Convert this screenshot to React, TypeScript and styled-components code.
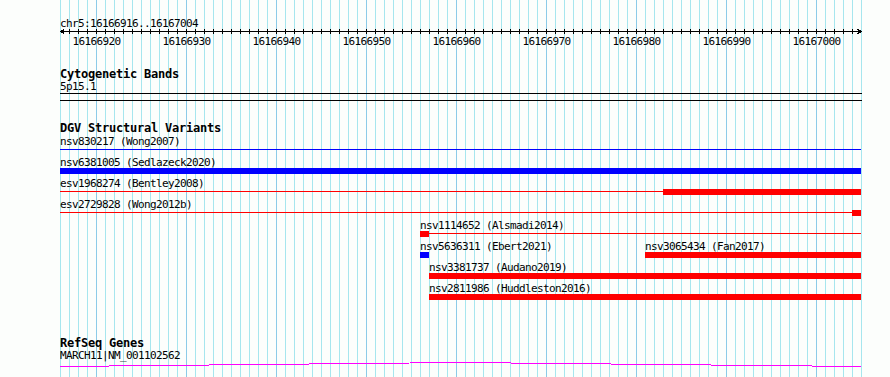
import React from 'react'
import styled, { createGlobalStyle } from 'styled-components'

// one base = 9px, panel starts at the first base of the view
const BP = 9
const VIEW_START = 16166916
const VIEW_WIDTH = 802

const GlobalStyle = createGlobalStyle`
    html, body {
        margin: 0;
        padding: 0;
        background: #fcfefc;
    }
`

const Panel = styled.div`
    width: ${VIEW_WIDTH}px;
    height: 377px;
    margin-left: 60px;
    overflow: hidden;
    background-color: #fcfefc;
    background-image: linear-gradient(90deg, #8ccbe8 1px, transparent 1px),
        linear-gradient(90deg, #a6e6ee 1px, transparent 1px);
    background-size: 90px 100%, 9px 100%;
    background-position: 36px 0, 0 0;
    background-repeat: repeat-x;
    font-family: "DejaVu Sans Mono", "Liberation Mono", monospace;
    color: #000;
`

const RulerTrack = styled.div`
    padding-top: 18px;
`

const Axis = styled.svg`
    display: block;
    overflow: visible;
`

const AxisLabel = styled.text`
    font-family: "DejaVu Sans Mono", "Liberation Mono", monospace;
    font-size: 11px;
    letter-spacing: -0.62px;
    fill: #000;
`

const Track = styled.section<{ $gap: number }>`
    margin-top: ${p => p.$gap}px;
`

const TrackTitle = styled.div`
    height: 12px;
    font-size: 12px;
    line-height: 12px;
    font-weight: bold;
    letter-spacing: -0.22px;
    white-space: pre;
`

const Label = styled.div<{ $gap?: number }>`
    height: 11px;
    margin-top: ${p => p.$gap ?? 0}px;
    font-size: 11px;
    line-height: 11px;
    letter-spacing: -0.62px;
    white-space: pre;
`

const Band = styled.div`
    height: 6px;
    margin-top: 1px;
    border-top: 1px solid #000;
    border-bottom: 1px solid #000;
`

const FeatureRow = styled.div`
    position: relative;
    height: 21px;
`

const Feature = styled.div<{ $left: number; $width: number }>`
    position: absolute;
    top: 2px;
    left: ${p => p.$left}px;
    width: ${p => p.$width}px;
`

const Glyph = styled.div`
    position: relative;
    height: 6px;
`

const Connector = styled.div<{ $color: string }>`
    position: absolute;
    left: 0;
    right: 0;
    top: 2px;
    height: 1px;
    background: ${p => p.$color};
`

const Block = styled.div<{ $color: string; $left: number; $width: number }>`
    position: absolute;
    top: 0;
    left: ${p => p.$left}px;
    width: ${p => p.$width}px;
    height: 6px;
    background: ${p => p.$color};
`

const GeneLine = styled.svg`
    display: block;
`

interface IVariant {
    name: string
    start: number
    end: number
    thickStart: number
    thickEnd: number
    color: string
    thin?: boolean
}

const RED = '#ff0000'
const BLUE = '#0000ff'

const px = (pos: number) => (pos - VIEW_START) * BP

const rows: IVariant[][] = [
    [{ name: 'nsv830217 (Wong2007)', start: 16166916, end: 16167005, thickStart: 0, thickEnd: 0, color: BLUE, thin: true }],
    [{ name: 'nsv6381005 (Sedlazeck2020)', start: 16166916, end: 16167005, thickStart: 16166916, thickEnd: 16167005, color: BLUE }],
    [{ name: 'esv1968274 (Bentley2008)', start: 16166916, end: 16167005, thickStart: 16166983, thickEnd: 16167005, color: RED, thin: true }],
    [{ name: 'esv2729828 (Wong2012b)', start: 16166916, end: 16167005, thickStart: 16167004, thickEnd: 16167005, color: RED, thin: true }],
    [{ name: 'nsv1114652 (Alsmadi2014)', start: 16166956, end: 16167005, thickStart: 16166956, thickEnd: 16166957, color: RED, thin: true }],
    [
        { name: 'nsv5636311 (Ebert2021)', start: 16166956, end: 16166957, thickStart: 16166956, thickEnd: 16166957, color: BLUE },
        { name: 'nsv3065434 (Fan2017)', start: 16166981, end: 16167005, thickStart: 16166981, thickEnd: 16167005, color: RED },
    ],
    [{ name: 'nsv3381737 (Audano2019)', start: 16166957, end: 16167005, thickStart: 16166957, thickEnd: 16167005, color: RED }],
    [{ name: 'nsv2811986 (Huddleston2016)', start: 16166957, end: 16167005, thickStart: 16166957, thickEnd: 16167005, color: RED }],
]

function Ruler(): JSX.Element {
    const ticks = Array.from({ length: 88 }, (_, i) => i + 1)
    const majors = Array.from({ length: 9 }, (_, i) => 4 + i * 10)
    return (
        <RulerTrack>
            <Label>chr5:16166916..16167004</Label>
            <Axis width={VIEW_WIDTH} height={19} shapeRendering="crispEdges">
                <line x1={0} y1={2.5} x2={VIEW_WIDTH} y2={2.5} stroke="#000" />
                {ticks.map(k => (
                    <line key={k} x1={k * BP + 0.5} y1={0} x2={k * BP + 0.5} y2={5} stroke="#000" />
                ))}
                <polyline points="4.5,0.5 0.5,2.5 4.5,4.5" fill="none" stroke="#000" />
                <polyline points="797.5,0.5 801.5,2.5 797.5,4.5" fill="none" stroke="#000" />
                {majors.map(k => (
                    <AxisLabel key={k} x={k * BP + 0.5} y={16} textAnchor="middle">
                        {VIEW_START + k}
                    </AxisLabel>
                ))}
            </Axis>
        </RulerTrack>
    )
}

function Variant({ v }: { v: IVariant }): JSX.Element {
    const left = px(v.start)
    const width = Math.min(px(v.end), VIEW_WIDTH) - left
    const thickLeft = px(v.thickStart) - left
    const thickWidth = Math.min(px(v.thickEnd), VIEW_WIDTH) - px(v.thickStart)
    return (
        <Feature $left={left} $width={width}>
            <Label>{v.name}</Label>
            <Glyph>
                {v.thin && <Connector $color={v.color} />}
                {thickWidth > 0 && <Block $color={v.color} $left={thickLeft} $width={thickWidth} />}
            </Glyph>
        </Feature>
    )
}

export default function App(): JSX.Element {
    return (
        <>
            <GlobalStyle />
            <Panel>
                <Ruler />

                <Track $gap={20}>
                    <TrackTitle>Cytogenetic Bands</TrackTitle>
                    <Label $gap={1}>5p15.1</Label>
                    <Band />
                </Track>

                <Track $gap={21}>
                    <TrackTitle>DGV Structural Variants</TrackTitle>
                    {rows.map((row, i) => (
                        <FeatureRow key={i}>
                            {row.map(v => (
                                <Variant key={v.name} v={v} />
                            ))}
                        </FeatureRow>
                    ))}
                </Track>

                <Track $gap={35}>
                    <TrackTitle>RefSeq Genes</TrackTitle>
                    <Label $gap={1}>MARCH11|NM_001102562</Label>
                    <GeneLine width={VIEW_WIDTH} height={6} shapeRendering="crispEdges">
                        <polyline points="0,5.5 400,1.5 801,5.5" fill="none" stroke="#ff00ff" />
                    </GeneLine>
                </Track>
            </Panel>
        </>
    )
}
